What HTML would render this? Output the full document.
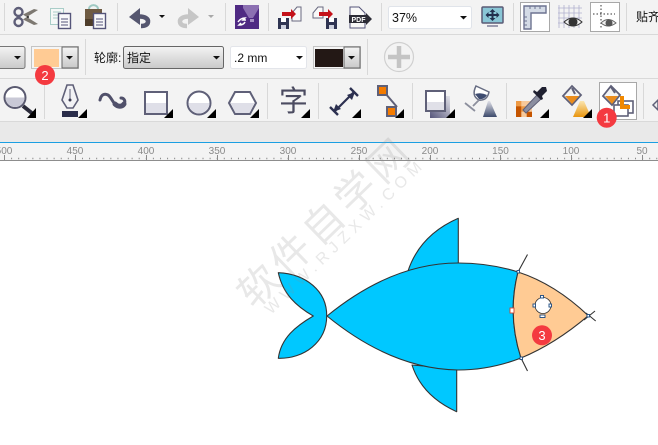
<!DOCTYPE html>
<html><head><meta charset="utf-8"><style>
html,body{margin:0;padding:0;background:#fff;width:658px;height:445px;overflow:hidden}
svg{display:block;position:absolute;left:0;top:0}
text{font-family:"Liberation Sans","Noto Sans CJK SC",sans-serif}
</style></head><body>
<svg width="658" height="445" viewBox="0 0 658 445" xmlns="http://www.w3.org/2000/svg">
<defs>
<linearGradient id="cb" x1="0" y1="0" x2="0" y2="1"><stop offset="0" stop-color="#f4f4f4"/><stop offset="1" stop-color="#c9c9c9"/></linearGradient>
<linearGradient id="cone" x1="0" y1="0" x2="0" y2="1"><stop offset="0" stop-color="#fbe6b0"/><stop offset="1" stop-color="#e8950f"/></linearGradient>
<linearGradient id="cone2" x1="0" y1="0" x2="0" y2="1"><stop offset="0" stop-color="#dfe0e8"/><stop offset="1" stop-color="#3d4a6b"/></linearGradient>
<linearGradient id="sh" x1="0" y1="1" x2="1" y2="0"><stop offset="0" stop-color="#55557a"/><stop offset="1" stop-color="#e4e4ea"/></linearGradient>
</defs>
<rect width="658" height="445" fill="#fff"/>
<rect width="658" height="122" fill="#f3f3f3"/>
<rect y="34" width="658" height="1" fill="#d9d9d9"/>
<rect y="78" width="658" height="1" fill="#d9d9d9"/>
<rect y="122" width="658" height="20" fill="#e9e9e9"/>
<rect y="121" width="658" height="1" fill="#d9d9d9"/>
<rect y="142" width="658" height="1.4" fill="#1b9fe2"/>
<rect y="143" width="658" height="17" fill="#f3f3f3"/>
<rect y="160" width="658" height="1" fill="#8d8d8d"/>

<!-- separators -->
<g fill="#d8d8d8">
<rect x="4" y="3" width="1" height="28"/><rect x="117" y="3" width="1" height="28"/><rect x="225" y="3" width="1" height="28"/><rect x="268" y="3" width="1" height="28"/><rect x="381" y="3" width="1" height="28"/><rect x="513" y="3" width="1" height="28"/><rect x="626" y="3" width="1" height="28"/>
<rect x="85" y="39" width="1" height="36"/><rect x="367" y="39" width="1" height="36"/>
<rect x="44" y="83" width="1" height="36"/><rect x="267" y="83" width="1" height="36"/><rect x="318" y="83" width="1" height="36"/><rect x="412" y="83" width="1" height="36"/><rect x="506" y="83" width="1" height="36"/><rect x="643" y="83" width="1" height="36"/>
</g>

<!-- scissors -->
<path d="M22 14L38 24L34 25L22 19ZM22 20L38 10L34 9L22 15Z" fill="#7d7871"/>
<g fill="none" stroke="#5e5e78" stroke-width="2.4"><circle cx="18.500" cy="12" r="4"/><circle cx="18.500" cy="22" r="4"/></g>
<circle cx="28" cy="17" r="1" fill="#222"/>
<!-- copy -->
<rect x="50.500" y="8.500" width="13" height="16" fill="#f5f8f7" stroke="#a9cdc8"/>
<path d="M53 12h8M53 15h8M53 18h6" stroke="#a9cdc8"/>
<rect x="58.500" y="13.500" width="12" height="15" fill="#f8f8fa" stroke="#55557a" stroke-width="1.400"/>
<path d="M61 19h7M61 22h7M61 25h7" stroke="#55557a"/>
<!-- paste -->
<path d="M85 9h17v7h-6v10H85Z" fill="#6e5a42"/><rect x="85" y="19" width="11" height="7" fill="#4e3d2a"/>
<path d="M89 9a4 3.500 0 0 1 9 0" fill="none" stroke="#9fc9c2" stroke-width="2"/>
<rect x="93.500" y="13.500" width="12" height="15" fill="#f8f8fa" stroke="#55557a" stroke-width="1.400"/>
<path d="M96 19h7M96 22h7M96 25h7" stroke="#55557a"/>
<!-- undo -->
<path d="M129 17L140 8V25Z" fill="#55566f"/>
<path d="M138 16.500C145 16 148.500 19 148 22C147.500 25 145 26 141 26" fill="none" stroke="#55566f" stroke-width="4.500"/>
<path d="M159 15h6l-3 3z" fill="#111"/>
<!-- redo -->
<g transform="translate(328,0) scale(-1,1)">
<path d="M129 17L140 8V25Z" fill="#c6c6c6"/>
<path d="M138 16.500C145 16 148.500 19 148 22C147.500 25 145 26 141 26" fill="none" stroke="#c6c6c6" stroke-width="4.500"/>
</g>
<path d="M208 15h6l-3 3z" fill="#a8a8a8"/>
<!-- purple logo -->
<rect x="235" y="5" width="24" height="24" fill="#4f2a83"/>
<path d="M243 5h16v3L253 18h-4L243 8Z" fill="#8c70b2"/><rect x="250" y="19" width="4" height="3" fill="#a58fc4"/>
<path d="M238 22c2-3 4-4 7-4l-2 2h3M245 22c-1 2-3 3-6 3l2-2" fill="none" stroke="#fff" stroke-width="1.500"/>
<!-- import -->
<rect x="278" y="18" width="11" height="11" fill="#2f3452"/><rect x="281" y="18" width="5" height="4" fill="#fff"/><rect x="281" y="25" width="5" height="4" fill="#cfd2df"/>
<path d="M292 13l5-6h4v14h-9z" fill="#f8f8f8" stroke="#6a6a80"/>
<path d="M282 12h9V9l5 5-5 5v-3h-9z" fill="#c4121a"/>
<!-- export -->
<path d="M313 13l5-6h5v11h-10z" fill="#f8f8f8" stroke="#6a6a80"/>
<rect x="326" y="18" width="11" height="11" fill="#2f3452"/><rect x="329" y="18" width="5" height="4" fill="#fff"/><rect x="329" y="25" width="5" height="4" fill="#cfd2df"/>
<path d="M319 12h9V9l5 5-5 5v-3h-9z" fill="#c4121a"/>
<!-- pdf -->
<path d="M350 28V7h9l6 6v15z" fill="#f8f8f8" stroke="#55557a"/>
<path d="M349 15h17v-2l6 6-6 6v-2h-17z" fill="#2c2c36"/>
<text x="351.500" y="22" font-size="7" font-weight="bold" fill="#fff">PDF</text>
<!-- zoom combo -->
<rect x="388.500" y="6.500" width="83" height="22" rx="2" fill="#fff" stroke="#e0e4ea"/>
<text x="392" y="22" font-size="12.500" fill="#111">37%</text>
<path d="M460 16h7l-3.500 3.500z" fill="#111"/>
<!-- fit -->
<rect x="482" y="7" width="21" height="16" rx="1" fill="#89c6d6" stroke="#5a5a75" stroke-width="1.500"/>
<path d="M487 26h11" stroke="#9c9cb0" stroke-width="2"/>
<path d="M492.500 9l3 3h-2v2h3v-2l3 3-3 3v-2h-3v2h2l-3 3-3-3h2v-2h-3v2l-3-3 3-3v2h3v-2h-2z" fill="#22304f"/>
<!-- rulers boxed -->
<rect x="520.500" y="2.500" width="29" height="29" fill="#fff" stroke="#a8a8a8"/>
<path d="M524 6h22v7h-15v16h-7z" fill="#d4dbe6" stroke="#6d7390" stroke-width="1.400"/>
<path d="M530 6v3M535 6v3M540 6v3M524 17h3M524 21h3M524 25h3" stroke="#6d7390"/>
<!-- grid eye -->
<path d="M559 5v23M564 5v23M569 5v23M574 5v23M579 5v23M558 8h24M558 13h24M558 18h24M558 23h24" stroke="#b0b0ce" stroke-width=".8" fill="none"/>
<path d="M564 22q9-8 18 0q-9 8-18 0z" fill="#eee" stroke="#333"/><circle cx="573" cy="22" r="4.500" fill="#333"/>
<!-- guides -->
<rect x="590.500" y="2.500" width="29" height="29" fill="#fff" stroke="#a8a8a8"/>
<path d="M593 14h22M601 5v24" stroke="#333" stroke-dasharray="1.500 2" fill="none"/>
<path d="M601 23q7-7 15 0q-8 6-15 0z" fill="#eee" stroke="#666"/><circle cx="609" cy="23" r="3.500" fill="#555"/>
<text x="636" y="21" font-size="12" fill="#111">贴齐</text>

<!-- row 2 -->
<rect x="-5" y="46.500" width="30" height="22" rx="2" fill="url(#cb)" stroke="#777"/>
<path d="M14 56h7l-3.500 3.500z" fill="#111"/>
<rect x="31.500" y="46.500" width="47" height="22" fill="#f5f5f5" stroke="#c4c4c4"/>
<rect x="34" y="49" width="25" height="18" fill="#ffcb94"/>
<rect x="62" y="47" width="16" height="21" fill="url(#cb)" stroke="#666"/>
<path d="M66 56h7l-3.500 3.500z" fill="#111"/>
<text x="94" y="62" font-size="12" fill="#111">轮廓:</text>
<rect x="123.500" y="46.500" width="100" height="22" rx="2" fill="url(#cb)" stroke="#666"/>
<text x="127" y="62" font-size="12" fill="#111">指定</text>
<path d="M213 56h7l-3.500 3.500z" fill="#111"/>
<rect x="230.500" y="46.500" width="76" height="22" rx="2" fill="#fff" stroke="#e3e5ea"/>
<text x="234" y="62" font-size="12" fill="#111">.2 mm</text>
<path d="M296 56h7l-3.500 3.500z" fill="#111"/>
<rect x="313.500" y="46.500" width="47" height="22" fill="#f5f5f5" stroke="#c4c4c4"/>
<rect x="315" y="49" width="28" height="18" fill="#231815"/>
<rect x="344" y="47" width="16" height="21" fill="url(#cb)" stroke="#666"/>
<path d="M348 56h7l-3.500 3.500z" fill="#111"/>
<circle cx="399" cy="57" r="14.500" fill="none" stroke="#d0d0d0" stroke-width="1.200"/>
<path d="M388 57h22M399 46v22" stroke="#c4c4c4" stroke-width="4.500"/>

<!-- row 3 -->
<path d="M23 106l10 8" stroke="#2b2b3a" stroke-width="4"/>
<circle cx="15" cy="97.500" r="10.500" fill="#fff" stroke="#5a5a70" stroke-width="2"/>
<path d="M5.500 97.500a9.500 9.500 0 0 0 19 0z" fill="#c9c9d6"/>
<path d="M36 108v10H27z" fill="#000"/>
<!-- pen -->
<path d="M67 85h6l5 15-5 8h-6l-5-8z" fill="#f2f2f5" stroke="#5f6078" stroke-width="1.600"/>
<path d="M70 89v10" stroke="#5f6078"/><circle cx="70" cy="100" r="1.500" fill="#3a3a50"/>
<rect x="62" y="111" width="16" height="6" fill="#2a2d4a"/>
<path d="M87 109v9H78z" fill="#000"/>
<!-- curl -->
<path d="M100 100c1-5 4-7 8-5c3 2 4 6 7 9c3 3 7 3 9 0c2-3 0-6-3-6" fill="none" stroke="#50506a" stroke-width="3" stroke-linecap="round"/>
<path d="M115 104c3 3 7 3 9 0" fill="none" stroke="#50506a" stroke-width="5" stroke-linecap="round"/>
<!-- rect -->
<rect x="145" y="92" width="22" height="22" fill="#fff" stroke="#5f6078" stroke-width="2"/>
<rect x="146" y="103" width="20" height="10" fill="#dfdfe8"/>
<path d="M173 109v9H164z" fill="#000"/>
<!-- ellipse -->
<circle cx="199" cy="103" r="11.500" fill="#fff" stroke="#5f6078" stroke-width="2"/>
<path d="M188.500 103a10.500 10.500 0 0 0 21 0z" fill="#dfdfe8"/>
<path d="M216 109v9H207z" fill="#000"/>
<!-- hexagon -->
<path d="M229 103l6-11h15l6 11-6 11h-15z" fill="#fff" stroke="#5f6078" stroke-width="2"/>
<path d="M230.500 103h24l-5 10h-14z" fill="#dfdfe8"/>
<path d="M259 109v9H250z" fill="#000"/>
<!-- 字 -->
<text x="279" y="111" font-size="29" fill="#4b4b60">字</text>
<path d="M310 109v9H301z" fill="#000"/>
<!-- dimension -->
<path d="M334 112l20-20" stroke="#2c3050" stroke-width="2.200"/>
<path d="M330 107l8 8M350 88l8 8" stroke="#2c3050" stroke-width="2.400"/>
<path d="M333 112l3-8 5 5zM355 92l-8 3 5 5z" fill="#2c3050"/>
<path d="M361 109v9H352z" fill="#000"/>
<!-- connector -->
<path d="M385 93l12 14" stroke="#5f6078" stroke-width="2"/>
<rect x="377" y="85" width="11" height="11" fill="#5f6078"/><rect x="379" y="87" width="7" height="7" fill="#f47b00"/>
<rect x="386" y="106" width="11" height="11" fill="#5f6078"/><rect x="388" y="108" width="7" height="7" fill="#f47b00"/>
<path d="M404 109v9H395z" fill="#000"/>
<!-- shadow -->
<rect x="430" y="96" width="20" height="22" fill="url(#sh)"/>
<rect x="426" y="91" width="19" height="20" fill="#fff" stroke="#5f6078" stroke-width="2"/>
<rect x="427" y="102" width="17" height="8" fill="#e0e0e8"/>
<path d="M455 109v9H446z" fill="#000"/>
<!-- transparency -->
<path d="M476 86L489 92Q487 101 479 100Q471 96 476 86z" fill="#fff" stroke="#666c82" stroke-width="1.500"/>
<path d="M475 94q6-2 12 1q-3 5-8 4z" fill="#3e4c70"/>
<path d="M479 100l-6 6M465 103l10 8" stroke="#8c8f9d" stroke-width="1.800"/>
<path d="M483 117l5-16h2l7 16z" fill="url(#cone2)"/>
<!-- eyedropper + checker -->
<rect x="516" y="101" width="16" height="16" fill="#f7c99a"/>
<path d="M516 101h5.300v5.300H516zM521.300 106.300h5.400v5.400h-5.400z" fill="#ee9a45"/>
<path d="M516 106.300h5.300v5.400H516zM516 111.700h5.300V117H516zM526.700 111.700H532V117h-5.300z" fill="#c55500"/>
<path d="M523 110l14-15 4 4-15 14z" fill="#8b8ea0" stroke="#5f6078"/>
<path d="M537 92l5-5 4 0 1 4-5 5 1 3-2 1-8-8 1-2z" fill="#1f2030"/>
<path d="M549 109v9H540z" fill="#000"/>
<!-- fill -->
<path d="M563 96l9-10 9 9-9 10z" fill="#f4f4f4" stroke="#5f6078" stroke-width="1.800"/>
<path d="M565 96h14l-7 8z" fill="#ea8c1c"/>
<path d="M572 88l3 6" stroke="#5f6078" stroke-width="2"/>
<path d="M573 117l7-16h4l7 16z" fill="url(#cone)"/>
<path d="M592 109v9H583z" fill="#000"/>
<!-- boxed -->
<rect x="599.500" y="82.500" width="37" height="37" fill="#fff" stroke="#a8a8a8"/>
<path d="M603 96l8-10 9 9-8 10z" fill="#f4f4f4" stroke="#5f6078" stroke-width="1.800"/>
<path d="M605 96h13l-6 8z" fill="#ea8c1c"/>
<path d="M611 87l4 6" stroke="#5f6078" stroke-width="2"/>
<rect x="618" y="101" width="15" height="12" fill="none" stroke="#5f6078" stroke-width="1.600"/>
<rect x="614" y="105" width="14" height="11" fill="#fff" stroke="#5f6078" stroke-width="1.600"/>
<path d="M620 96h4v9h6v4h-10z" fill="#f08800"/>
<!-- partial right icon -->
<path d="M653 105l5-5v10z" fill="#eee" stroke="#5f6078" stroke-width="1.500"/>

<!-- ruler -->
<g font-size="10" fill="#8a8a8a" text-anchor="middle">
<text x="4" y="154">500</text><text x="75" y="154">450</text><text x="146" y="154">400</text><text x="217" y="154">350</text><text x="288" y="154">300</text><text x="359" y="154">250</text><text x="430" y="154">200</text><text x="500.500" y="154">150</text><text x="571" y="154">100</text><text x="642" y="154">50</text>
</g>
<path d="M4.500 155v5M75.500 155v5M146.500 155v5M217.500 155v5M288.500 155v5M359.500 155v5M430.500 155v5M500.500 155v5M571.500 155v5M642.500 155v5" stroke="#8a8a8a"/>
<path d="M0 158.500H658" stroke="#8a8a8a" stroke-dasharray="1 6.090" stroke-dashoffset="-4" stroke-width="1.600"/>

<!-- fish -->
<g stroke="#333" stroke-width="1.100" stroke-linejoin="round">
<path d="M408 271Q420 235 458.300 218.300V264L408 271Z" fill="#00c8ff"/>
<path d="M412 365Q422 396 456.700 411.700V369L412 365Z" fill="#00c8ff"/>
<path d="M278.300 272.700C306 274 327 291 326.700 316C326.700 342 304 359 278.300 358.300C281 338 296 326 313.300 316C296 306 283 294 278.300 272.700Z" fill="#00c8ff"/>
<path d="M327 316Q392 263 458 263Q490 263 518 272Q507 315 521 358Q490 370 458 370Q392 369 327 316Z" fill="#00c8ff"/>
<path d="M518 272Q555 284 588.300 315.700Q555 344 521 358Q507 315 518 272Z" fill="#ffcb94"/>
<path d="M518 272L527.500 254.500M521 358L527.500 371M584 320L595 311M586 313L595.700 321" fill="none"/>
</g>
<circle cx="543" cy="305.500" r="8" fill="#fff" stroke="#333" stroke-width=".8"/>
<g fill="#fff" stroke="#1a4a80" stroke-width=".9">
<rect x="540.500" y="295.500" width="3" height="2.500"/><rect x="533" y="304" width="2.500" height="3"/><rect x="549" y="304" width="2.500" height="3"/><rect x="540" y="315" width="5" height="2.500"/>
<rect x="587" y="314.500" width="2.500" height="2.500"/><rect x="517" y="270.500" width="2.500" height="2.500"/><rect x="520" y="357" width="2.500" height="2.500"/>
</g>
<rect x="510" y="308" width="4" height="5" fill="#fff" stroke="#d2432c" stroke-width=".9"/>

<!-- watermark -->
<g fill="#8c8c8c" fill-opacity=".2">
<text transform="translate(254,310) rotate(-44)" font-size="40" letter-spacing="5">软件自学网</text>
<text transform="translate(271,315) rotate(-44)" font-size="16" letter-spacing="5.500">WWW.RJZXW.COM</text>
</g>

<!-- badges -->
<g fill="#f43a40"><circle cx="45" cy="75" r="10"/><circle cx="606.700" cy="117.700" r="10"/><circle cx="542" cy="335.300" r="10"/></g>
<g fill="#fff" font-size="13" text-anchor="middle">
<text x="45" y="80">2</text><text x="606.700" y="122.500">1</text><text x="542" y="340">3</text>
</g>
</svg>
</body></html>
